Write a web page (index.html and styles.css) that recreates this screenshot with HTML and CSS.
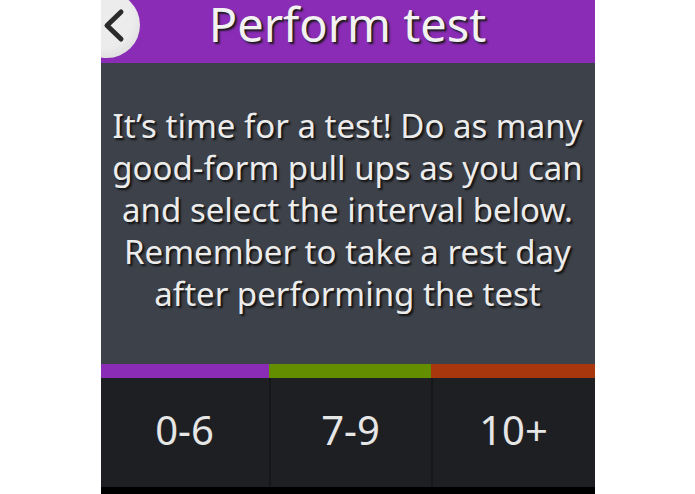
FILE: index.html
```html
<!DOCTYPE html>
<html>
  <head>
    <title>Perform test</title>
    <link rel="stylesheet" href="styles.css">
  </head>
  <body>
    <div class="screen">
      <div class="header">
        <div class="back-btn">
          <svg width="24" height="36" viewBox="0 0 24 36">
            <path d="M19 4 L5 17.5 L19 31" fill="none" stroke="#2b2b2b" stroke-width="5" stroke-linecap="round" stroke-linejoin="round" />
          </svg>
        </div>
        <h1 class="title">Perform test</h1>
      </div>
      <div class="message">
        <p>It’s time for a test! Do as many<br>good-form pull ups as you can<br>and select the interval below.<br>Remember to take a rest day<br>after performing the test</p>
      </div>
      <div class="choices">
        <div class="choice">
          <div class="bar bar-purple"></div>
          <button type="button" class="choice-btn">0-6</button>
        </div>
        <div class="choice">
          <div class="bar bar-green"></div>
          <button type="button" class="choice-btn">7-9</button>
        </div>
        <div class="choice">
          <div class="bar bar-red"></div>
          <button type="button" class="choice-btn">10+</button>
        </div>
      </div>
      <div class="bottom-strip"></div>
    </div>
  </body>
</html>
```

FILE: styles.css
```css
body {
  margin: 0;
  background-color: white;
  font-family: "Noto Sans", "Open Sans", sans-serif;
}
.screen {
  width: 494px;
  height: 494px;
  margin: 0 auto;
  display: flex;
  flex-direction: column;
}
.header {
  position: relative;
  height: 63px;
  overflow: hidden;
  background-color: #8a2cb6;
}
.back-btn {
  position: absolute;
  left: -27px;
  top: -8px;
  width: 66px;
  height: 66px;
  border-radius: 50%;
  background: radial-gradient(circle at 45% 40%, #ececec 55%, #d2d2d2 100%);
  display: flex;
  align-items: center;
  justify-content: flex-end;
  box-sizing: border-box;
  padding-right: 14px;
  padding-top: 2px;
}
.title {
  margin: 0;
  font-size: 47px;
  font-weight: normal;
  line-height: 48px;
  text-align: center;
  color: #f2f2f2;
  text-shadow: 2px 2px 2px #1a1a1a;
}
.message {
  height: 301px;
  box-sizing: border-box;
  padding-top: 42px;
  background-color: #3d4149;
}
.message p {
  margin: 0;
  font-size: 33px;
  line-height: 42px;
  text-align: center;
  color: #ececec;
  text-shadow: 2px 2px 2px #111111;
}
.choices {
  display: grid;
  grid-template-columns: 168px 162px 1fr;
  height: 123px;
  background-color: #1e1f23;
}
.choice {
  display: flex;
  flex-direction: column;
}
.bar {
  height: 14px;
}
.bar-purple {
  background-color: #8a2cb6;
}
.bar-green {
  background-color: #628e00;
}
.bar-red {
  background-color: #a8370d;
}
.choice-btn {
  flex: 1;
  border: none;
  border-left: 2px solid #16171a;
  background-color: #1e1f23;
  color: #e6e6e6;
  font-family: "Noto Sans", "Open Sans", sans-serif;
  font-size: 40px;
  line-height: 40px;
  padding: 0 0 6px 0;
}
.choice:first-child .choice-btn {
  border-left: none;
}
.bottom-strip {
  height: 7px;
  background-color: black;
}
```
